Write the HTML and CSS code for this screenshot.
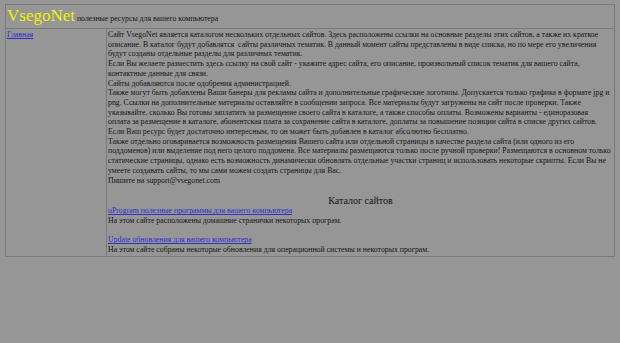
FILE: index.html
```
<!DOCTYPE html>
<html lang="ru">
<head>
<meta charset="UTF-8" />
<title>VsegoNet - полезные ресурсы для вашего компьютера</title>
<link rel="stylesheet" href="styles.css">
</head>
<body>

<table class="layout">
  <colgroup>
    <col class="menu-col">
    <col>
  </colgroup>
  <tr>
    <td colspan="2" class="header">
      <span class="logo">VsegoNet</span> полезные ресурсы для вашего компьютера
    </td>
  </tr>
  <tr>
    <td class="menu"><a href="#">Главная</a></td>
    <td class="content">
      Сайт VsegoNet является каталогом нескольких отдельных сайтов. Здесь расположены ссылки на основные разделы этих сайтов, а также их краткое<br>
      описание. В каталог будут добавлятся&nbsp; сайты различных тематик. В данный момент сайты представлены в виде списка, но по мере его увеличения<br>
      будут созданы отдельные разделы для различных тематик.<br>
      Если Вы желаете разместить здесь ссылку на свой сайт - укажите адрес сайта, его описание, произвольный список тематик для вашего сайта,<br>
      контактные данные для связи.<br>
      Сайты добавляются после одобрения администрацией.<br>
      Также могут быть добавлены Ваши банеры для рекламы сайта и дополнительные графические логотипы. Допускается только графика в формате jpg и<br>
      png. Ссылки на дополнительные материалы оставляйте в сообщении запроса. Все материалы будут загружены на сайт после проверки. Также<br>
      указывайте, сколько Вы готовы заплатить за размещение своего сайта в каталоге, а также способы оплаты. Возможены варианты - единоразовая<br>
      оплата за размещение в каталоге, абонентская плата за сохранение сайта в каталоге, доплаты за повышение позиции сайта в списке других сайтов.<br>
      Если Ваш ресурс будет достаточно интересным, то он может быть добавлен в каталог абсолютно бесплатно.<br>
      Также отдельно оговаривается возможность размещения Вашего сайта или отдельной страницы в качестве раздела сайта (или одного из его<br>
      поддоменов) или выделение под него целого поддомена. Все материалы размещаются только после ручной проверки! Размещаются в основном только<br>
      статические страницы, однако есть возможность динамически обновлять отдельные участки страниц и использовать некоторые скрипты. Если Вы не<br>
      умеете создавать сайты, то мы сами можем создать страницы для Вас.<br>
      Пишите на support@vsegonet.com

      <h2>Каталог сайтов</h2>

      <div class="site">
        <a href="#">uProgram полезные программы для вашего компьютера</a><br>
        На этом сайте расположены домашние странички некоторых програм.
      </div>
      <div class="site">
        <a href="#">Update обновления для вашего компьютера</a><br>
        На этом сайте собраны некоторые обновления для операционной системы и некоторых програм.
      </div>
    </td>
  </tr>
</table>

</body>
</html>
```

FILE: styles.css
```
body {
  margin: 4px 5px;
  background-color: #969696;
  color: #151515;
  font-family: "Liberation Serif", "Times New Roman", serif;
  font-size: 7.8px;
  line-height: 9.7px;
}
a {
  color: #2e2ec8;
}
.layout {
  width: 610px;
  table-layout: fixed;
  border: 1px solid #777;
  border-collapse: collapse;
}
.menu-col {
  width: 101px;
}
.layout td {
  border: 1px solid #7a7a7a;
  padding: 1px;
  vertical-align: top;
}
.header {
  height: 21px;
  vertical-align: bottom;
}
.logo {
  color: #f2f200;
  font-size: 17px;
  line-height: 20px;
}
.content {
  white-space: nowrap;
  padding-bottom: 1px;
}
h2 {
  margin: 10px 0 0;
  text-align: center;
  font-size: 10px;
  font-weight: normal;
  line-height: 11px;
}
.site + .site {
  margin-top: 9.7px;
}
```
